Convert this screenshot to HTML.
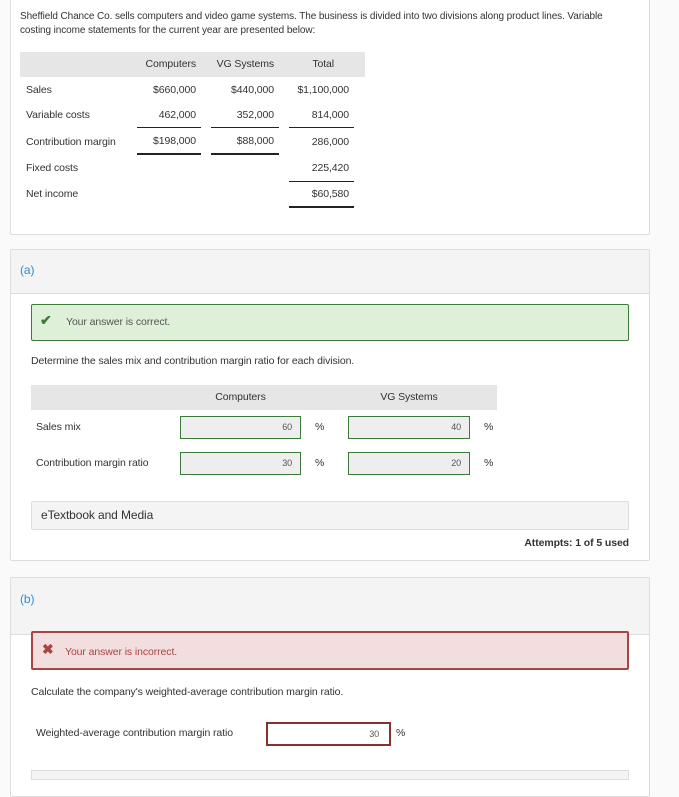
<!DOCTYPE html>
<html><head><meta charset="utf-8"><style>
*{box-sizing:border-box;margin:0;padding:0}
body{width:679px;height:775px;overflow:hidden;background:#fafafa;font-family:"Liberation Sans",sans-serif;color:#333;font-size:10.5px;position:relative;letter-spacing:-0.1px}
.abs{position:absolute;white-space:nowrap;line-height:15px}
.card{position:absolute;left:10px;width:640px;background:#fff;border:1px solid #ddd;border-radius:2px}
.hdr{position:absolute;left:0;right:0;top:0;background:#f4f4f4;border-bottom:1px solid #ddd}
.r{text-align:right}
.ln{position:absolute;background:#222}
.inp{position:absolute;height:23px;background:#eee;border:1px solid #3c7a3a;text-align:right;padding-right:8px;font-size:9px;line-height:21px;color:#555}
</style></head><body>
<div class="card" style="top:-2px;height:237px;border-top:none"></div>
<div class="abs" style="left:20px;top:10px;line-height:14px;font-size:10px">Sheffield Chance Co. sells computers and video game systems. The business is divided into two divisions along product lines. Variable<br>costing income statements for the current year are presented below:</div>
<div class="abs" style="left:20px;top:52px;width:345px;height:25px;background:#e6e6e6"></div>
<div class="abs r" style="left:130px;width:66px;top:57px">Computers</div>
<div class="abs r" style="left:200px;width:74px;top:57px">VG Systems</div>
<div class="abs r" style="left:280px;width:54px;top:57px">Total</div>
<div class="abs" style="left:26px;top:83px">Sales</div>
<div class="abs" style="left:26px;top:108px">Variable costs</div>
<div class="abs" style="left:26px;top:135px">Contribution margin</div>
<div class="abs" style="left:26px;top:161px">Fixed costs</div>
<div class="abs" style="left:26px;top:187px">Net income</div>
<div class="abs r" style="left:130px;width:66px;top:83px">$660,000</div>
<div class="abs r" style="left:200px;width:74px;top:83px">$440,000</div>
<div class="abs r" style="left:280px;width:69px;top:83px">$1,100,000</div>
<div class="abs r" style="left:130px;width:66px;top:108px">462,000</div>
<div class="abs r" style="left:200px;width:74px;top:108px">352,000</div>
<div class="abs r" style="left:280px;width:69px;top:108px">814,000</div>
<div class="abs r" style="left:130px;width:66px;top:134px">$198,000</div>
<div class="abs r" style="left:200px;width:74px;top:134px">$88,000</div>
<div class="abs r" style="left:280px;width:69px;top:135px">286,000</div>
<div class="abs r" style="left:280px;width:69px;top:161px">225,420</div>
<div class="abs r" style="left:280px;width:69px;top:187px">$60,580</div>
<div class="ln" style="left:137px;width:64px;top:127px;height:1px"></div>
<div class="ln" style="left:211px;width:68px;top:127px;height:1px"></div>
<div class="ln" style="left:289px;width:65px;top:127px;height:1px"></div>
<div class="ln" style="left:137px;width:64px;top:153px;height:2px"></div>
<div class="ln" style="left:211px;width:68px;top:153px;height:2px"></div>
<div class="ln" style="left:289px;width:65px;top:181px;height:1px"></div>
<div class="ln" style="left:289px;width:65px;top:206px;height:2px"></div>

<div class="card" style="top:249px;height:312px"><div class="hdr" style="height:44px"></div></div>
<div class="abs" style="left:20px;top:263px;color:#2a8fd8;font-size:12px">(a)</div>
<div class="abs" style="left:31px;top:304px;width:598px;height:37px;background:#dff0d8;border:1px solid #3c7a3a;border-radius:2px"></div>
<div class="abs" style="left:40px;top:313px;color:#3c7a3a;font-size:14px;font-weight:bold">✔</div>
<div class="abs" style="left:66px;top:315px;color:#555">Your answer is correct.</div>
<div class="abs" style="left:31px;top:354px">Determine the sales mix and contribution margin ratio for each division.</div>
<div class="abs" style="left:31px;top:385px;width:466px;height:25px;background:#e6e6e6"></div>
<div class="abs" style="left:180px;width:121px;top:390px;text-align:center">Computers</div>
<div class="abs" style="left:348px;width:122px;top:390px;text-align:center">VG Systems</div>
<div class="abs" style="left:36px;top:420px">Sales mix</div>
<div class="abs" style="left:36px;top:456px">Contribution margin ratio</div>
<div class="inp" style="left:180px;width:121px;top:416px">60</div>
<div class="inp" style="left:348px;width:122px;top:416px">40</div>
<div class="inp" style="left:180px;width:121px;top:452px">30</div>
<div class="inp" style="left:348px;width:122px;top:452px">20</div>
<div class="abs" style="left:315px;top:420px">%</div>
<div class="abs" style="left:484px;top:420px">%</div>
<div class="abs" style="left:315px;top:456px">%</div>
<div class="abs" style="left:484px;top:456px">%</div>
<div class="abs" style="left:31px;top:501px;width:598px;height:29px;background:#f4f4f4;border:1px solid #ddd;border-radius:2px"></div>
<div class="abs" style="left:41px;top:508px;font-size:12px">eTextbook and Media</div>
<div class="abs r" style="left:429px;width:200px;top:536px;font-weight:bold">Attempts: 1 of 5 used</div>

<div class="card" style="top:577px;height:220px"><div class="hdr" style="height:57px"></div></div>
<div class="abs" style="left:20px;top:592px;color:#2a8fd8;font-size:12px">(b)</div>
<div class="abs" style="left:31px;top:631px;width:598px;height:39px;background:#f2dede;border:2px solid #a94442;border-radius:2px"></div>
<div class="abs" style="left:42px;top:642px;color:#a94442;font-size:14px;font-weight:bold">✖</div>
<div class="abs" style="left:65px;top:645px;color:#a94442">Your answer is incorrect.</div>
<div class="abs" style="left:31px;top:685px">Calculate the company's weighted-average contribution margin ratio.</div>
<div class="abs" style="left:36px;top:726px">Weighted-average contribution margin ratio</div>
<div class="abs" style="left:266px;top:722px;width:125px;height:24px;background:#fff;border:2px solid #8b2e2e;text-align:right;padding-right:10px;font-size:9px;line-height:20px;color:#555">30</div>
<div class="abs" style="left:396px;top:726px">%</div>
<div class="abs" style="left:31px;top:770px;width:598px;height:10px;background:#f4f4f4;border:1px solid #ddd"></div>
</body></html>
